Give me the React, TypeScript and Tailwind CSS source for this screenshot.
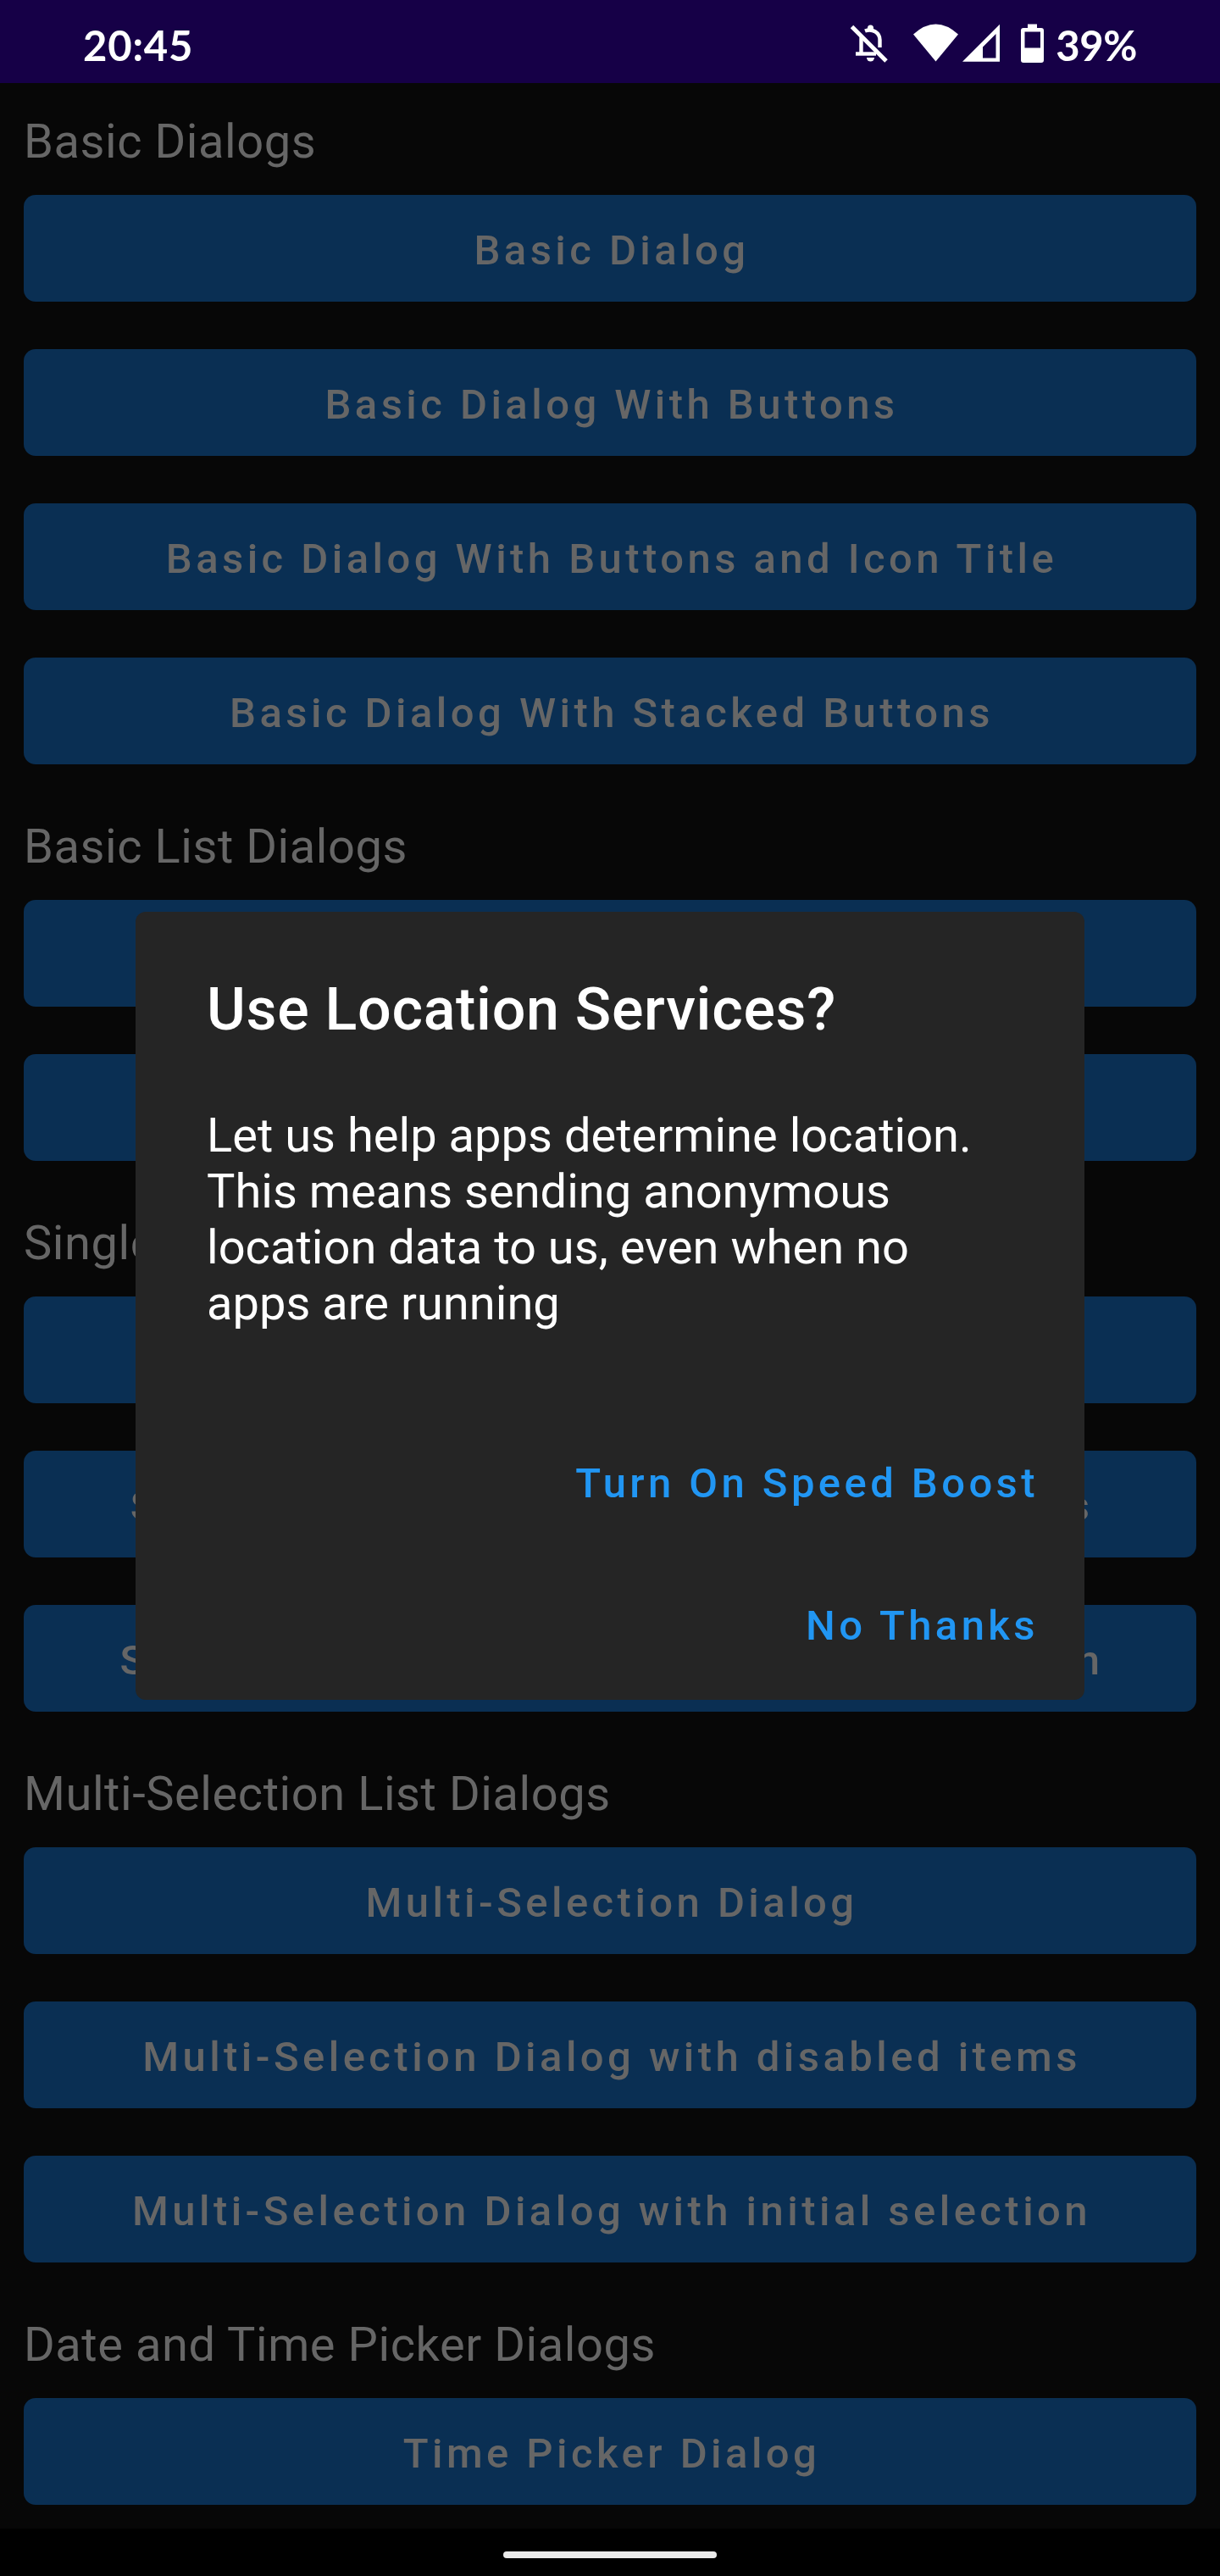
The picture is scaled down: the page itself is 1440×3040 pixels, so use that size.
type Section = { title: string; buttons: string[] };

const sections: Section[] = [
  {
    title: "Basic Dialogs",
    buttons: [
      "Basic Dialog",
      "Basic Dialog With Buttons",
      "Basic Dialog With Buttons and Icon Title",
      "Basic Dialog With Stacked Buttons",
    ],
  },
  { title: "Basic List Dialogs", buttons: ["Simple List Dialog", "Custom List Dialog"] },
  {
    title: "Single-Selection List Dialogs",
    buttons: [
      "Single-Selection Dialog",
      "Single-Selection Dialog with disabled items",
      "Single-Selection Dialog with initial selection",
    ],
  },
  {
    title: "Multi-Selection List Dialogs",
    buttons: [
      "Multi-Selection Dialog",
      "Multi-Selection Dialog with disabled items",
      "Multi-Selection Dialog with initial selection",
    ],
  },
  { title: "Date and Time Picker Dialogs", buttons: ["Time Picker Dialog"] },
];

function StatusBar() {
  return (
    <header className="flex h-[98px] shrink-0 items-center bg-[#160047] pl-[98px] pr-[98px] font-['Lato'] text-[49px] font-bold text-white">
      <span className="mt-[8px] leading-none tracking-[0.8px]">20:45</span>
      <svg className="ml-auto mr-[1px] h-[98px] w-[245px]" viewBox="1000 0 245 98" fill="#fff">
        {/* Muted bell */}
        <g fill="none" stroke="#fff" strokeWidth="4.4">
          <path d="M1005.500 31.500L1046 72" strokeWidth="5" />
          <path d="M1010 63.500H1034" />
          <path d="M1016.500 63V46q0-2 .8-4" />
          <path d="M1021 36.500C1030 33 1038.500 39 1038.500 47V56" />
        </g>
        <circle cx="1027.500" cy="33" r="3.500" />
        <path d="M1023 68h9a4.500 4.500 0 0 1-9 0z" />
        {/* Wi-Fi */}
        <path d="M1078 40.500Q1104.500 16.500 1131 40.500L1104.500 72.500z" />
        {/* Cellular */}
        <path fillRule="evenodd" d="M1136 72.700L1180 28.700V72.700zM1160 68.500H1175.500V40L1160 55.500z" />
        {/* Battery */}
        <path
          fillRule="evenodd"
          d="M1213 28.500h11v4.500h5q3 0 3 3V71q0 3-3 3h-21q-3 0-3-3V36q0-3 3-3h5zM1209.500 37.500V56.500H1228V37.500z"
        />
      </svg>
      <span className="mt-[8px] leading-none tracking-[-0.4px]">39%</span>
    </header>
  );
}

function SectionBlock({ title, buttons }: Section) {
  return (
    <section>
      <h2 className="h-[132px] whitespace-nowrap pt-[28px] text-[56px] font-normal leading-[82px] tracking-[0.57px] text-[#666]">
        {title}
      </h2>
      <div className="flex flex-col gap-14 pb-7">
        {buttons.map((label) => (
          <button
            key={label}
            className="flex h-[126px] items-center justify-center whitespace-nowrap rounded-[14px] bg-[#0a2f53] pt-1.5 pl-1 text-[49px] font-medium tracking-[4.45px] text-[#666]"
          >
            {label}
          </button>
        ))}
      </div>
    </section>
  );
}

function Dialog() {
  return (
    <div
      role="dialog"
      className="absolute left-[160px] top-[1076px] flex h-[930px] w-[1120px] flex-col rounded-[12px] bg-[#252525] text-white"
    >
      <h1 className="pl-[84px] pt-[75px] text-[70px] font-medium leading-[80px] tracking-[0.7px]">
        Use Location Services?
      </h1>
      <p className="pl-[84px] pt-[76px] text-[56px] leading-[66px] tracking-[0.03px]">
        Let us help apps determine location.
        <br />
        This means sending anonymous
        <br />
        location data to us, even when no
        <br />
        apps are running
      </p>
      <div className="flex flex-col items-end gap-[104px] pr-[54px] pt-[148px] text-[49px] font-medium leading-[64px] tracking-[4.42px] text-[#2196f3]">
        <button>Turn On Speed Boost</button>
        <button>No Thanks</button>
      </div>
    </div>
  );
}

export default function App() {
  return (
    <div className="relative flex h-[3040px] w-[1440px] flex-col overflow-hidden bg-[#070707] font-['Roboto',sans-serif]">
      <StatusBar />
      <main className="flex flex-1 flex-col px-7">
        {sections.map((s) => (
          <SectionBlock key={s.title} {...s} />
        ))}
      </main>
      <footer className="flex h-14 shrink-0 items-center justify-center bg-black pt-1.5">
        <div className="h-2 w-[252px] rounded-full bg-[#ebebeb]" />
      </footer>
      <Dialog />
    </div>
  );
}
